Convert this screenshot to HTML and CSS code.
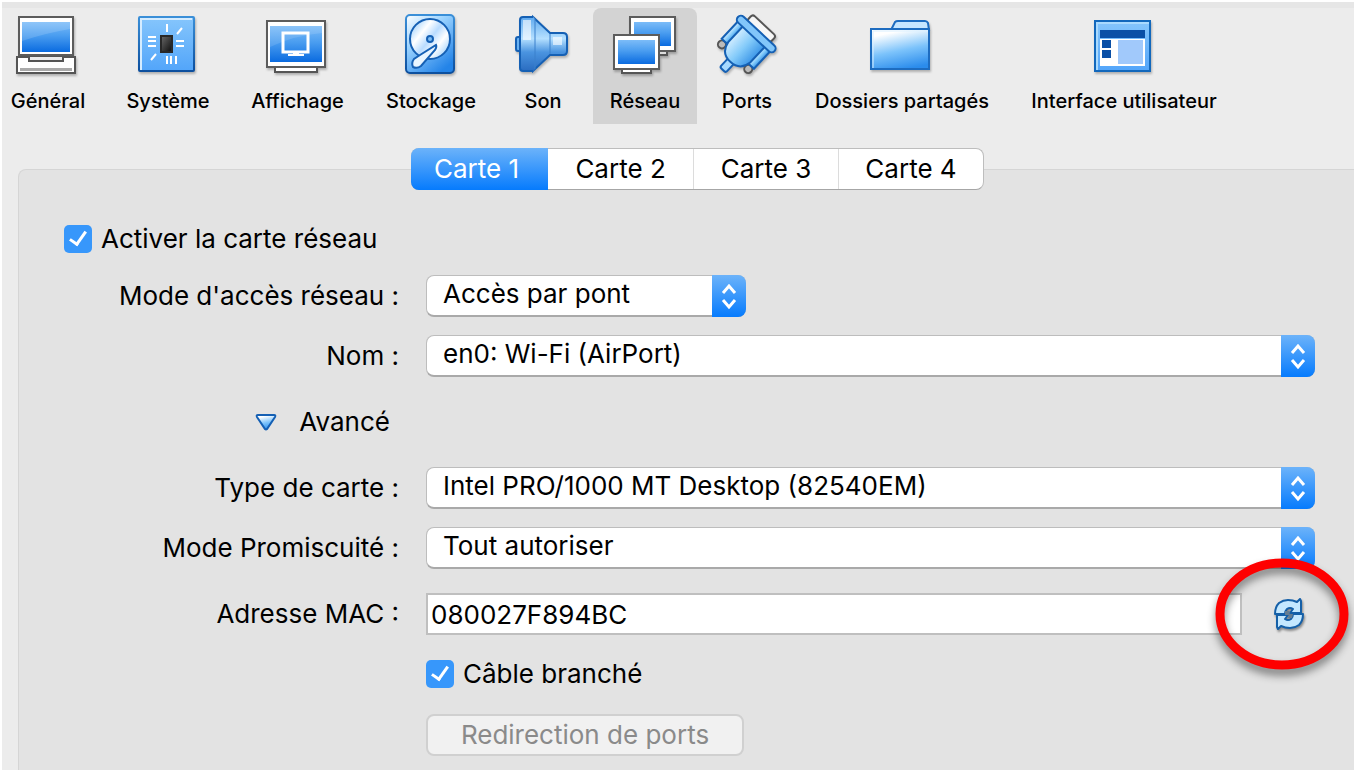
FILE: index.html
```html
<!DOCTYPE html>
<html lang="fr">
<head>
    <meta charset="UTF-8">
    <meta name="viewport" content="width=device-width, initial-scale=1.0">
    <title>Réseau</title>
    <link rel="stylesheet" href="styles.css">
</head>
<body>
    <div class="window">
        <!-- Shared gradients -->
        <svg class="defs" aria-hidden="true">
            <defs>
                <linearGradient id="screen" x1="0" y1="0" x2="0" y2="1">
                    <stop offset="0" stop-color="#7cbcf8"/>
                    <stop offset="0.45" stop-color="#4a9df0"/>
                    <stop offset="1" stop-color="#0a6be0"/>
                </linearGradient>
                <linearGradient id="panelBlue" x1="0" y1="0" x2="0" y2="1">
                    <stop offset="0" stop-color="#86c6fc"/>
                    <stop offset="1" stop-color="#52a5fa"/>
                </linearGradient>
                <linearGradient id="edgeBlue" x1="0" y1="0" x2="0" y2="1">
                    <stop offset="0" stop-color="#3a8fd8"/>
                    <stop offset="1" stop-color="#0c4f9e"/>
                </linearGradient>
                <linearGradient id="disk" x1="0" y1="0" x2="0.7" y2="1">
                    <stop offset="0" stop-color="#ffffff"/>
                    <stop offset="0.4" stop-color="#9bd3ff"/>
                    <stop offset="1" stop-color="#2484e8"/>
                </linearGradient>
                <linearGradient id="platter" x1="0" y1="0.1" x2="1" y2="0.9">
                    <stop offset="0" stop-color="#8cc8fc"/>
                    <stop offset="0.3" stop-color="#ffffff"/>
                    <stop offset="0.5" stop-color="#b9dcff"/>
                    <stop offset="0.7" stop-color="#ffffff"/>
                    <stop offset="1" stop-color="#8cc8fc"/>
                </linearGradient>
                <linearGradient id="horn" x1="0" y1="0" x2="0" y2="1">
                    <stop offset="0" stop-color="#5fa9ee"/>
                    <stop offset="0.4" stop-color="#b5e0ff"/>
                    <stop offset="0.65" stop-color="#4a94e0"/>
                    <stop offset="1" stop-color="#2a6cc0"/>
                </linearGradient>
                <linearGradient id="folder" x1="0.3" y1="0" x2="0.6" y2="1">
                    <stop offset="0.1" stop-color="#ffffff"/>
                    <stop offset="0.55" stop-color="#7cc3fb"/>
                    <stop offset="1" stop-color="#2b8cec"/>
                </linearGradient>
                <linearGradient id="chip" x1="0" y1="0" x2="1" y2="1">
                    <stop offset="0" stop-color="#6a6a6a"/>
                    <stop offset="1" stop-color="#0c0c0c"/>
                </linearGradient>
                <linearGradient id="plug" x1="0" y1="0" x2="1" y2="0">
                    <stop offset="0" stop-color="#d0ecff"/>
                    <stop offset="0.5" stop-color="#84cbfa"/>
                    <stop offset="1" stop-color="#3d97e8"/>
                </linearGradient>
            </defs>
        </svg>

        <nav class="toolbar">
            <button type="button" class="tool">
                <svg class="tool-icon" viewBox="0 0 64 64">
                    <path d="M3 4h54v38H3z" fill="#fff" stroke="#5c5c5c" stroke-width="2"/>
                    <path d="M6 9h48v30H6z" fill="url(#screen)"/>
                    <path d="M6 9h48v7Q30 20 6 28z" fill="#fff" opacity=".15"/>
                    <path d="M1 44h58v16H1z" fill="#fff" stroke="#555" stroke-width="2"/>
                    <path d="M4 55h52v3H4z" fill="#a9a9a9"/>
                    <path d="M13 44v4h34v-4" fill="#ececec" stroke="#555" stroke-width="2"/>
                </svg>
                <span>Général</span>
            </button>
            <button type="button" class="tool">
                <svg class="tool-icon" viewBox="0 0 64 64">
                    <rect x="3" y="4" width="55" height="54" rx="1" fill="url(#panelBlue)" stroke="url(#edgeBlue)" stroke-width="2"/>
                    <path d="M5 57V6h51" fill="none" stroke="#d5ecff" stroke-width="2"/>
                    <path d="M31 11v8M46 15l-5 6M12 24h8M12 28h8M12 33h8M40 28h8M40 33h8M20 41l-5 6M31 43v8M35 43v8M40 43v8" fill="none" stroke="#fff" stroke-width="2"/>
                    <path d="M25 23h11v16H25z" fill="url(#chip)" stroke="#282828" stroke-width="2"/>
                </svg>
                <span>Système</span>
            </button>
            <button type="button" class="tool">
                <svg class="tool-icon" viewBox="0 0 64 64">
                    <path d="M9 54h42v5H9z" fill="#fff" stroke="#555" stroke-width="2"/>
                    <path d="M1 8h58v46H1z" fill="#fff" stroke="#5c5c5c" stroke-width="2"/>
                    <path d="M4 13h52v36H4z" fill="url(#screen)"/>
                    <path d="M4 13h52v7Q30 22 4 34z" fill="#fff" opacity=".12"/>
                    <path d="M17 20h25v19H17z" fill="none" stroke="#fff" stroke-width="3"/>
                    <path d="M27 39h6v2h5v2H22v-2h5z" fill="#fff"/>
                </svg>
                <span>Affichage</span>
            </button>
            <button type="button" class="tool">
                <svg class="tool-icon" viewBox="0 0 64 64">
                    <rect x="7" y="2" width="48" height="58" rx="4" fill="url(#disk)" stroke="url(#edgeBlue)" stroke-width="2"/>
                    <circle cx="31" cy="26" r="20" fill="url(#platter)" stroke="#1560b4" stroke-width="2"/>
                    <circle cx="31" cy="26" r="3" fill="#7cbcf4" stroke="#1560b4" stroke-width="2"/>
                    <path d="M37 32q1 2-1 5L22 53q-4 3-8 1-2-4 1-8l6-4z" fill="#e8f5ff" stroke="#1560b4" stroke-width="2"/>
                </svg>
                <span>Stockage</span>
            </button>
            <button type="button" class="tool">
                <svg class="tool-icon" viewBox="0 0 64 64">
                    <rect x="5" y="24" width="7" height="14" rx="2" fill="#69b1f2" stroke="#1560b4" stroke-width="2"/>
                    <path d="M22 4l17 16h13q4 0 4 4v14q0 4-4 4H39L22 58z" fill="url(#horn)" stroke="#1560b4" stroke-width="2"/>
                    <path d="M9 6q0-2 3-2h10q2 1 2 3v48q0 3-2 3H11q-2 0-2-2z" fill="url(#horn)"/>
                    <path d="M22 4H12q-3 0-3 3v48q0 3 3 3h10" fill="none" stroke="#1560b4" stroke-width="2"/>
                    <path d="M12 7h8v20h-8z" fill="#fff" opacity=".6"/>
                    <path d="M39 21v20M24 6v50" stroke="#3a80cc" stroke-width="1"/>
                    <path d="M42 24h9v8h-9z" fill="#fff" opacity=".6"/>
                </svg>
                <span>Son</span>
            </button>
            <button type="button" class="tool tool-active">
                <svg class="tool-icon" viewBox="0 0 64 64">
                    <path d="M34 38h20v4H34z" fill="#ddd" stroke="#555" stroke-width="2"/>
                    <path d="M17 4h45v34H17z" fill="#fff" stroke="#5c5c5c" stroke-width="2"/>
                    <path d="M21 9h37v24H21z" fill="url(#screen)"/>
                    <path d="M9 56h29v4H9z" fill="#fff" stroke="#555" stroke-width="2"/>
                    <path d="M1 22h45v34H1z" fill="#fff" stroke="#5c5c5c" stroke-width="2"/>
                    <path d="M5 27h37v24H5z" fill="url(#screen)"/>
                </svg>
                <span>Réseau</span>
            </button>
            <button type="button" class="tool">
                <svg class="tool-icon" viewBox="0 0 64 64">
                    <!-- connector drawn upright, then turned -->
                    <g transform="translate(31 32) rotate(43)" stroke-width="2">
                        <rect x="-16" y="-27" width="32" height="9" rx="3" fill="#f6f6f6" stroke="#555"/>
                        <circle cx="-18" cy="16" r="4" fill="#bbb" stroke="#555"/>
                        <circle cx="18" cy="16" r="4" fill="#bbb" stroke="#555"/>
                        <rect x="-22" y="-12" width="8" height="24" fill="url(#plug)" stroke="#1560b4"/>
                        <rect x="14" y="-12" width="8" height="24" fill="url(#plug)" stroke="#1560b4"/>
                        <rect x="-4" y="20" width="8" height="14" rx="2" fill="#a6d9ff" stroke="#1560b4"/>
                        <path d="M-15-13h30V10Q13 23 0 23T-15 10z" fill="url(#plug)" stroke="#1560b4"/>
                        <rect x="-25" y="-19" width="50" height="8" rx="4" fill="#82c6fa" stroke="#1560b4"/>
                    </g>
                </svg>
                <span>Ports</span>
            </button>
            <button type="button" class="tool">
                <svg class="tool-icon" viewBox="0 0 64 64">
                    <path d="M21 17l4-8q1-1 3-1h27q2 0 3 2l1 7z" fill="#c6e6ff" stroke="#1d6cc0" stroke-width="2"/>
                    <path d="M1 16h58v40H1z" fill="url(#folder)" stroke="#1d6cc0" stroke-width="2"/>
                    <path d="M3 55V18h55" fill="none" stroke="#d9efff" stroke-width="1"/>
                </svg>
                <span>Dossiers partagés</span>
            </button>
            <button type="button" class="tool">
                <svg class="tool-icon" viewBox="0 0 64 64">
                    <path d="M3 8h55v50H3z" fill="url(#panelBlue)" stroke="#1268bc" stroke-width="2"/>
                    <path d="M5 57V10h52" fill="none" stroke="#a9dafe" stroke-width="2"/>
                    <path d="M8 17h45v8H8z" fill="#0a4fa6"/>
                    <path d="M8 26h45v27H8z" fill="#fff"/>
                    <path d="M10 27h9v8h-9zM10 37h9v8h-9z" fill="#0a4fa6"/>
                    <path d="M26 27h25v24H26z" fill="#a1c9fb"/>
                </svg>
                <span>Interface utilisateur</span>
            </button>
        </nav>

        <main class="panel">
            <div class="tabs">
                <button type="button" class="tab tab-active">Carte 1</button>
                <button type="button" class="tab">Carte 2</button>
                <button type="button" class="tab">Carte 3</button>
                <button type="button" class="tab">Carte 4</button>
            </div>

            <form class="form">
                <div class="check wide">
                    <input type="checkbox" id="enable" checked>
                    <label for="enable">Activer la carte réseau</label>
                </div>

                <label class="name" for="mode">Mode d'accès réseau :</label>
                <div class="combo combo-small">
                    <select id="mode">
                        <option>Accès par pont</option>
                    </select>
                    <svg class="arrows" viewBox="0 0 34 42"><path d="M11 18l6-7 6 7M11 25l6 7 6-7"/></svg>
                </div>

                <label class="name" for="adapter">Nom :</label>
                <div class="combo">
                    <select id="adapter">
                        <option>en0: Wi-Fi (AirPort)</option>
                    </select>
                    <svg class="arrows" viewBox="0 0 34 42"><path d="M11 18l6-7 6 7M11 25l6 7 6-7"/></svg>
                </div>

                <button type="button" class="advanced">
                    <svg class="triangle" viewBox="0 0 22 18">
                        <path d="M3 2h16q2 0 1 2l-8 12q-1 1-2 0L2 4q-1-2 1-2z" fill="url(#folder)" stroke="#1560b4" stroke-width="2"/>
                    </svg>
                    <span>Avancé</span>
                </button>

                <label class="name" for="type">Type de carte :</label>
                <div class="combo">
                    <select id="type">
                        <option>Intel PRO/1000 MT Desktop (82540EM)</option>
                    </select>
                    <svg class="arrows" viewBox="0 0 34 42"><path d="M11 18l6-7 6 7M11 25l6 7 6-7"/></svg>
                </div>

                <label class="name" for="promiscuous">Mode Promiscuité :</label>
                <div class="combo">
                    <select id="promiscuous">
                        <option>Tout autoriser</option>
                    </select>
                    <svg class="arrows" viewBox="0 0 34 42"><path d="M11 18l6-7 6 7M11 25l6 7 6-7"/></svg>
                </div>

                <label class="name" for="mac">Adresse MAC :</label>
                <div class="mac">
                    <input type="text" id="mac" value="080027F894BC">
                    <button type="button" class="refresh" aria-label="Actualiser">
                        <svg viewBox="0 0 32 32">
                            <g fill="#c4e8ff" stroke="#1560a8" stroke-width="2" stroke-linejoin="round">
                                <path d="M2 16Q2 9 6 5q4-3 9-3 5 0 9 2l3-3 1 2v12H17l3-4q-3-2-6 0-2 2-2 5z"/>
                                <path d="M30 16q0 7-4 11-4 3-9 3-5 0-9-2l-3 3-1-2V17h11l-3 4q3 2 6 0 2-2 2-5z"/>
                            </g>
                            <path d="M12 13h5l-1 3h4l-1 4h-4l1-3h-4z" fill="#667d92"/>
                        </svg>
                    </button>
                    <!-- highlight ring around the refresh button -->
                    <svg class="ring" viewBox="0 0 134 112"><ellipse cx="67" cy="56" rx="62" ry="51"/></svg>
                </div>

                <div class="check field">
                    <input type="checkbox" id="cable" checked>
                    <label for="cable">Câble branché</label>
                </div>

                <div class="field forward">
                    <button type="button" class="push" disabled>Redirection de ports</button>
                </div>
            </form>
        </main>
    </div>
</body>
</html>
```
FILE: styles.css
```css
* {
    box-sizing: border-box;
}

body {
    margin: 0;
    padding: 2px 0 2px 2px;
    height: 100vh;
    overflow: hidden;
    background: #fff;
    color: #000;
    font-family: Inter, Roboto, sans-serif;
    font-size: 26px;
    line-height: 30px;
}

button, select, input {
    font: inherit;
    color: inherit;
    margin: 0;
}

button {
    border: none;
    background: none;
    padding: 0;
}

.window {
    display: flex;
    flex-direction: column;
    height: 100%;
    overflow: hidden;
    background: #ececec;
    border-top: 6px solid #e6e6e6;
}

.defs {
    position: absolute;
    width: 0;
    height: 0;
}

/* Toolbar */
.toolbar {
    display: grid;
    grid-template-columns: 108px 116px 127px 124px 84px 104px 84px 210px 218px;
    gap: 8px;
    margin-left: -8px;
}

.tool {
    display: flex;
    flex-direction: column;
    align-items: center;
    gap: 11px;
    padding: 5px 0 10px;
    border-radius: 8px 8px 0 0;
    font-size: 20px;
    font-weight: 500;
    line-height: 26px;
    white-space: nowrap;
}

.tool-active {
    background: #d3d3d3;
}

.tool-icon {
    width: 64px;
    height: 64px;
    filter: drop-shadow(1px 2px 1px rgba(0, 0, 0, 0.25));
}

/* Panel */
.panel {
    flex: 1;
    margin: 45px -24px 0 16px;
    padding: 0 62px 0 45px;
    background: #e3e3e3;
    border: 1px solid #d5d5d5;
    border-bottom: none;
    border-radius: 8px 8px 0 0;
}

.tabs {
    display: flex;
    width: 573px;
    height: 42px;
    margin: -22px auto 34px;
    transform: translateX(8px);
    border: 1px solid #bdbdbd;
    border-bottom-color: #a6a6a6;
    border-radius: 8px;
    background: #fff;
}

.tab {
    width: 146px;
    border-left: 1px solid #dcdcdc;
}

.tab-active {
    width: 138px;
    margin: -1px 0 -1px -1px;
    padding-right: 6px;
    border: none;
    border-radius: 8px 0 0 8px;
    background: linear-gradient(#6cb3fa, #067bfd);
    color: #fff;
}

.tab-active + .tab {
    border-left: none;
}

/* Form */
.form {
    display: grid;
    grid-template-columns: 335px 1fr;
    column-gap: 27px;
    row-gap: 18px;
    align-items: center;
}

.name {
    text-align: right;
    white-space: nowrap;
}

.check {
    display: flex;
    align-items: center;
    gap: 9px;
    height: 30px;
}

.wide {
    grid-column: 1 / 3;
    margin-bottom: 3px;
}

.field {
    grid-column: 2;
}

.check input {
    appearance: none;
    position: relative;
    width: 28px;
    height: 28px;
    border-radius: 5px;
    background: #3797fb;
}

.check input:checked::after {
    content: "";
    position: absolute;
    left: 9px;
    top: 3px;
    width: 7px;
    height: 14px;
    border: solid #fff;
    border-width: 0 3px 3px 0;
    transform: rotate(35deg);
}

.combo {
    position: relative;
    height: 42px;
}

.combo-small {
    width: 320px;
}

.combo select {
    appearance: none;
    width: 100%;
    height: 42px;
    padding: 0 44px 4px 16px;
    border: 1px solid #bdbdbd;
    border-bottom: 2px solid #a9a9a9;
    border-radius: 8px;
    background: #fff;
}

.arrows {
    position: absolute;
    right: 0;
    top: 0;
    width: 34px;
    height: 42px;
    border-radius: 0 8px 8px 0;
    background: linear-gradient(#6cb3fa, #067bfd);
    fill: none;
    stroke: #fff;
    stroke-width: 3;
    pointer-events: none;
}

.advanced {
    display: flex;
    align-items: center;
    justify-content: flex-end;
    gap: 22px;
    height: 54px;
    padding-right: 9px;
    grid-column: 1;
}

.advanced + .name {
    grid-column: 1;
}

.triangle {
    width: 22px;
    height: 18px;
}

.mac {
    position: relative;
    display: flex;
    align-items: center;
    gap: 31px;
    height: 54px;
}

.mac input {
    flex: 1;
    min-width: 0;
    height: 42px;
    padding: 0 3px;
    border: 2px solid #bfbfbf;
    border-radius: 0;
    background: #fff;
}

.refresh {
    width: 32px;
    height: 32px;
    margin-right: 10px;
    filter: drop-shadow(1px 2px 1px rgba(0, 0, 0, 0.4));
}

.refresh svg {
    display: block;
}

.ring {
    position: absolute;
    right: -34px;
    top: -29px;
    width: 134px;
    height: 112px;
    overflow: visible;
    fill: none;
    stroke: #fe0000;
    stroke-width: 9;
    pointer-events: none;
    filter: drop-shadow(0 6px 4px rgba(0, 0, 0, 0.45));
}

.forward {
    display: flex;
    align-items: center;
    height: 56px;
}

.push {
    width: 318px;
    height: 42px;
    border: 2px solid #d0d0d0;
    border-radius: 8px;
    background: #f1f1f1;
    color: #8a8a8a;
}
```
